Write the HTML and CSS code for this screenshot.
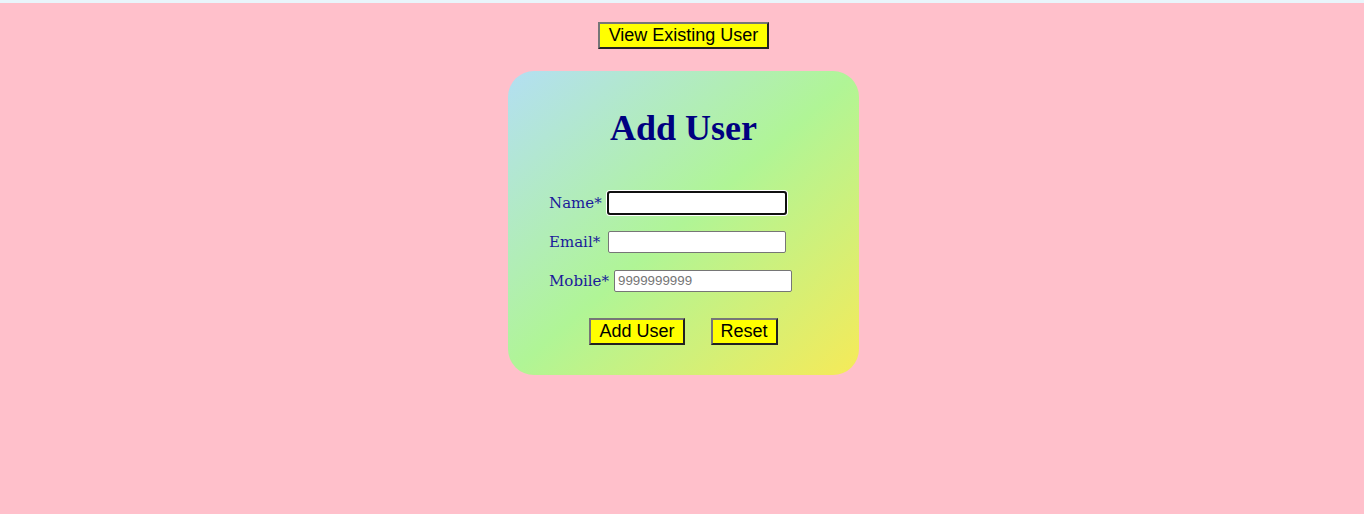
FILE: index.html
```html
<!DOCTYPE html>
<html>
<head>
<meta charset="utf-8">
<link rel="stylesheet" href="styles.css">
</head>
<body>
<div class="page">
  <div class="top">
    <button class="btn btn-wide">View Existing User</button>
  </div>
  <div class="card">
    <h1 class="title">Add User</h1>
    <form class="form">
      <div class="row"><label class="lbl">Name*</label> <input class="inp focus" type="text"></div>
      <div class="row"><label class="lbl lbl-email">Email*</label> <input class="inp" type="text"></div>
      <div class="row"><label class="lbl lbl-mobile">Mobile*</label> <input class="inp" type="text" placeholder="9999999999"></div>
      <div class="actions">
        <button class="btn" type="button">Add User</button>
        <button class="btn" type="button">Reset</button>
      </div>
    </form>
  </div>
</div>
</body>
</html>
```
FILE: styles.css
```css
html {
  background: #e9f5fb;
  margin: 0;
  height: 100%;
}
body {
  margin: 3px 0 0 0;
  background: #ffc0cb;
  min-height: 511px;
}
.page {
  display: flex;
  flex-direction: column;
  align-items: center;
  padding-left: 3px;
}
.top {
  padding-top: 19px;
}
.btn {
  background-color: #ffff00;
  font-family: "Liberation Sans", Arial, sans-serif;
  font-size: 18px;
  line-height: 21px;
  color: #000;
  padding: 1px 8px;
  border: 2px outset #767676;
  margin: 0;
}
.btn-wide {
  padding: 1px 9px;
}
.card {
  margin-top: 22px;
  width: 351px;
  height: 304px;
  box-sizing: border-box;
  border-radius: 26px;
  background: linear-gradient(to bottom right, #b3dff3 0%, #b0f596 50%, #f6ea58 100%);
  padding: 0 0 0 41px;
}
.title {
  margin: 37px 0 0 -41px;
  text-align: center;
  font-family: "Liberation Serif", "DejaVu Serif", serif;
  font-weight: bold;
  font-size: 36px;
  color: #000080;
  line-height: 40px;
}
.form {
  margin-top: 43px;
  display: flex;
  flex-direction: column;
  gap: 16px;
}
.row {
  display: flex;
  align-items: center;
  gap: 6px;
  height: 23px;
}
.lbl {
  font-family: "DejaVu Serif", serif;
  font-size: 15px;
  color: #1a1a9a;
}
.lbl-email {
  margin-right: 2px;
}
.lbl-mobile {
  margin-right: -1px;
}
.inp {
  width: 178px;
  height: 22px;
  box-sizing: border-box;
  border: 1px solid #767676;
  border-radius: 2px;
  padding: 1px 3px;
  font-family: "Liberation Sans", Arial, sans-serif;
  font-size: 13.33px;
  background: #fff;
  margin: 0;
}
.inp::placeholder {
  color: #757575;
}
.focus {
  outline: 2px solid #101010;
  outline-offset: -1px;
  box-shadow: 0 0 0 2px #fff;
}
.actions {
  margin-top: 10px;
  margin-left: -41px;
  display: flex;
  justify-content: center;
  gap: 26px;
}
```
